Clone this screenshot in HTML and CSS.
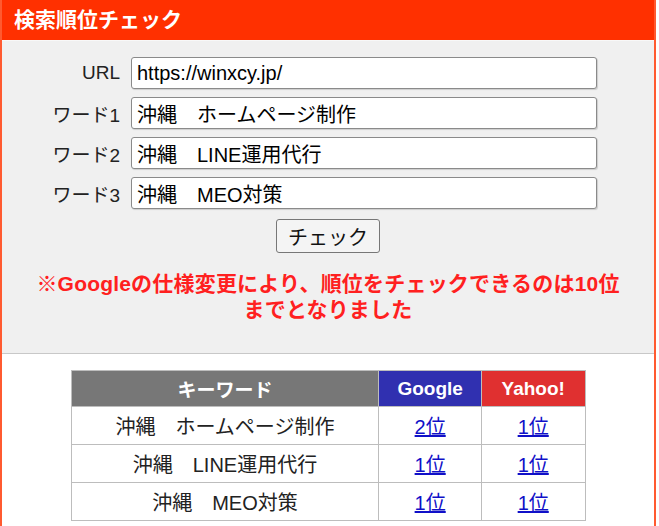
FILE: index.html
```html
<!DOCTYPE html>
<html lang="ja">
<head>
<meta charset="utf-8">
<title>検索順位チェック</title>
<link rel="stylesheet" href="styles.css">
</head>
<body>
<div class="panel">
  <div class="panel-head">検索順位チェック</div>
  <form class="form-area">
    <div class="form-row">
      <label class="form-label">URL</label>
      <input class="form-input" type="text" value="https://winxcy.jp/">
    </div>
    <div class="form-row">
      <label class="form-label">ワード1</label>
      <input class="form-input" type="text" value="沖縄　ホームページ制作">
    </div>
    <div class="form-row">
      <label class="form-label">ワード2</label>
      <input class="form-input" type="text" value="沖縄　LINE運用代行">
    </div>
    <div class="form-row">
      <label class="form-label">ワード3</label>
      <input class="form-input" type="text" value="沖縄　MEO対策">
    </div>
    <div class="btn-row">
      <button class="check-btn" type="button">チェック</button>
    </div>
    <p class="notice">※Googleの仕様変更により、順位をチェックできるのは10位<br>までとなりました</p>
  </form>
  <div class="result-area">
    <table class="result-table">
      <thead>
        <tr>
          <th class="th-key">キーワード</th>
          <th class="th-google">Google</th>
          <th class="th-yahoo">Yahoo!</th>
        </tr>
      </thead>
      <tbody>
        <tr>
          <td class="td-key">沖縄　ホームページ制作</td>
          <td><a href="#">2位</a></td>
          <td><a href="#">1位</a></td>
        </tr>
        <tr>
          <td class="td-key">沖縄　LINE運用代行</td>
          <td><a href="#">1位</a></td>
          <td><a href="#">1位</a></td>
        </tr>
        <tr>
          <td class="td-key">沖縄　MEO対策</td>
          <td><a href="#">1位</a></td>
          <td><a href="#">1位</a></td>
        </tr>
      </tbody>
    </table>
  </div>
</div>
</body>
</html>
```
FILE: styles.css
```css
html, body {
  margin: 0;
  padding: 0;
  background: #ffffff;
}
body {
  font-family: "Liberation Sans", "Noto Sans CJK JP", sans-serif;
  color: #111;
}
.panel {
  box-sizing: border-box;
  width: 656px;
  border-left: 2px solid #ff5a30;
  border-right: 2px solid #ff5a30;
  min-height: 526px;
  background: #fff;
}
.panel-head {
  height: 40px;
  line-height: 40px;
  background: #ff3000;
  color: #fff;
  font-weight: bold;
  font-size: 21px;
  padding-left: 12px;
}
.form-area {
  margin: 0;
  background: #f0f0f0;
  border-top: 1px solid #f8f8f8;
  border-bottom: 1px solid #c8c8c8;
  padding: 16px 0 30px;
  display: flex;
  flex-direction: column;
  gap: 8px;
}
.form-row {
  display: flex;
  align-items: center;
  gap: 11px;
}
.form-label {
  width: 118px;
  text-align: right;
  font-size: 19px;
  color: #222;
}
.form-input {
  box-sizing: border-box;
  width: 466px;
  height: 32px;
  border: 1px solid #8a8a8a;
  border-radius: 3px;
  background: #fff;
  font-family: "Liberation Sans", "Noto Sans CJK JP", sans-serif;
  font-size: 20px;
  color: #000;
  padding: 0 5px;
  box-shadow: 1px 1px 1px rgba(0,0,0,0.15);
}
.btn-row {
  display: flex;
  justify-content: center;
  margin-top: 2px;
}
.check-btn {
  box-sizing: border-box;
  width: 104px;
  height: 34px;
  border: 1px solid #777;
  border-radius: 3px;
  background: #f4f4f4;
  font-family: "Noto Sans CJK JP", sans-serif;
  font-size: 20px;
  color: #111;
  padding: 0;
}
.notice {
  margin: 10px 0 0;
  text-align: center;
  color: #ff2020;
  font-weight: bold;
  font-size: 21px;
  line-height: 26px;
  letter-spacing: 0.2px;
}
.result-area {
  padding: 16px 0 10px;
  display: flex;
  justify-content: center;
}
.result-table {
  border-collapse: collapse;
  width: 515px;
  font-size: 20px;
}
.result-table th, .result-table td {
  border: 1px solid #bdbdbd;
  text-align: center;
  padding: 0;
}
.result-table th {
  height: 35px;
  color: #fff;
  font-weight: bold;
  font-size: 19px;
}
.result-table td {
  height: 37px;
  background: #fff;
}
.th-key { background: #777777; width: 310px; }
.th-google { background: #3030b0; width: 102px; }
.th-yahoo { background: #e03030; width: 103px; }
.td-key { color: #222; }
.result-table a {
  color: #1010c8;
  text-decoration: underline;
}
```
